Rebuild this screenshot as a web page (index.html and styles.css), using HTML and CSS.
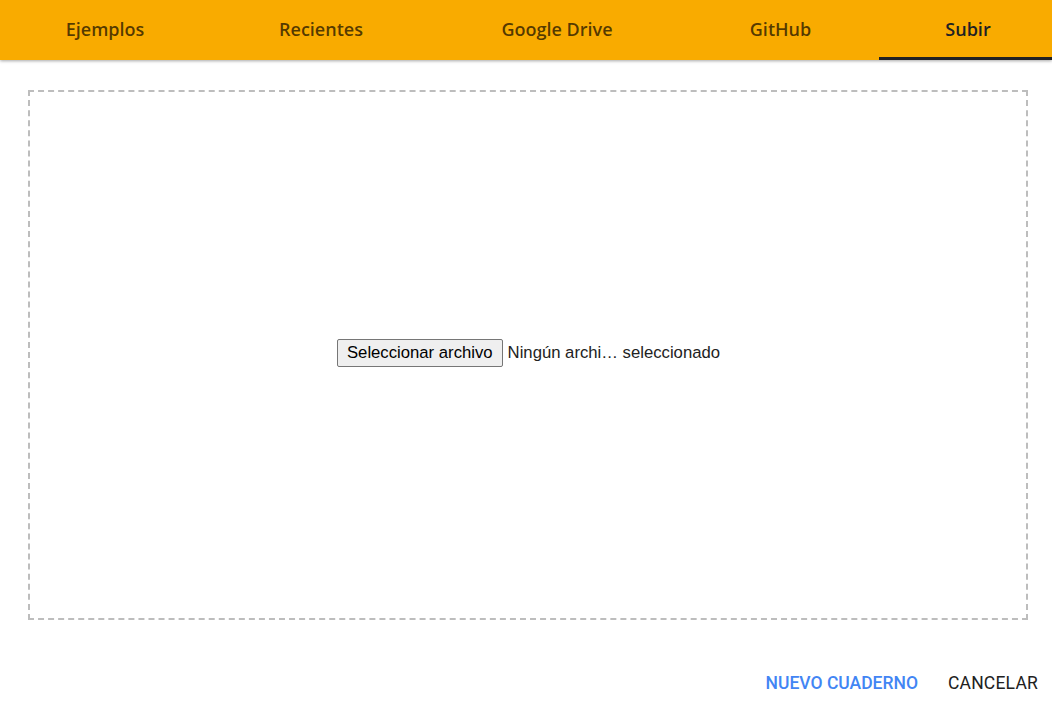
FILE: index.html
```html
<!DOCTYPE html>
<html lang="es">
<head>
<meta charset="utf-8">
<link rel="stylesheet" href="styles.css">
</head>
<body>
<div class="tabs">
  <div class="tab">Ejemplos</div>
  <div class="tab">Recientes</div>
  <div class="tab">Google Drive</div>
  <div class="tab">GitHub</div>
  <div class="tab active">Subir</div>
</div>
<main class="content">
  <div class="dropzone">
    <div class="file-input">
      <span class="file-btn">Seleccionar archivo</span>
      <span class="file-name">Ningún archi… seleccionado</span>
    </div>
  </div>
</main>
<div class="actions">
  <button class="action primary">NUEVO CUADERNO</button>
  <button class="action">CANCELAR</button>
</div>
</body>
</html>
```

FILE: styles.css
```css
html, body {
  margin: 0;
  padding: 0;
  background: #fff;
}
body {
  width: 1052px;
  height: 708px;
  overflow: hidden;
  font-family: Roboto, "Liberation Sans", sans-serif;
}
.tabs {
  display: grid;
  grid-template-columns: 210px 222px 250px 197px 173px;
  height: 60px;
  background: #f9ab00;
  box-shadow: 0 1px 3px rgba(0, 0, 0, 0.35);
  position: relative;
  z-index: 1;
}
.tab {
  display: flex;
  align-items: center;
  justify-content: center;
  font-family: "Open Sans", sans-serif;
  font-weight: 600;
  font-size: 18px;
  color: rgba(0, 0, 0, 0.68);
  box-sizing: border-box;
  border-bottom: 3px solid transparent;
  padding-top: 1px;
}
.tab.active {
  color: #202124;
  border-bottom-color: #202124;
  padding-left: 5px;
}
.content {
  padding: 30px 24px 0 28px;
}
.dropzone {
  height: 530px;
  box-sizing: border-box;
  border: 2px dashed #bdbdbd;
  display: flex;
  align-items: center;
  justify-content: center;
  padding-left: 1px;
  padding-bottom: 4px;
}
.file-input {
  display: flex;
  align-items: center;
  font-family: "Liberation Sans", Arial, sans-serif;
  font-size: 16.7px;
  color: #000;
}
.file-btn {
  display: inline-block;
  box-sizing: border-box;
  height: 28px;
  line-height: 26px;
  padding: 0 9px;
  background: #efefef;
  border: 1px solid #767676;
  border-radius: 2px;
  color: #000;
}
.file-name {
  margin-left: 5px;
  color: #222;
}
.actions {
  display: flex;
  justify-content: flex-end;
  gap: 14px;
  padding: 45px 6px 0 0;
}
.action {
  height: 36px;
  padding: 0 8px;
  border: none;
  background: transparent;
  font-family: Roboto, sans-serif;
  font-weight: 400;
  font-size: 17.5px;
  letter-spacing: 0.2px;
  color: #212121;
  cursor: pointer;
}
.action.primary {
  font-weight: 500;
  letter-spacing: 0;
  color: #4285f4;
}
```
